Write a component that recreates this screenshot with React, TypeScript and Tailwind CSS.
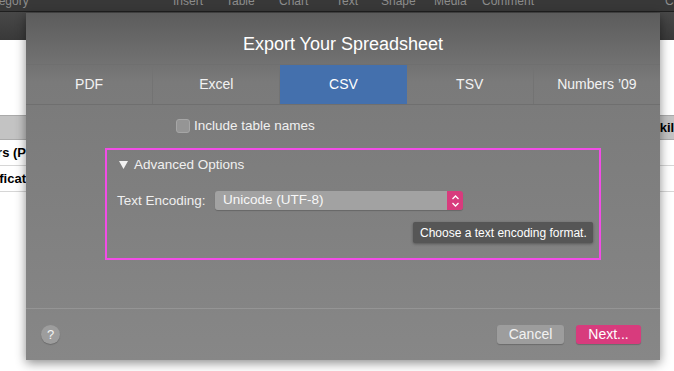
import * as React from "react";

const MENU = [
  { label: "Category", w: "w-[173px]", shift: "-ml-[20px]" },
  { label: "Insert", w: "w-[53px]", shift: "" },
  { label: "Table", w: "w-[53px]", shift: "" },
  { label: "Chart", w: "w-[57px]", shift: "" },
  { label: "Text", w: "w-[45px]", shift: "" },
  { label: "Shape", w: "w-[53px]", shift: "" },
  { label: "Media", w: "w-[48px]", shift: "" },
  { label: "Comment", w: "w-[183px]", shift: "" },
  { label: "Collaborate", w: "w-[40px]", shift: "" },
];

const TABS = ["PDF", "Excel", "CSV", "TSV", "Numbers ’09"];

function StepperIcon() {
  return (
    <svg width="9" height="14" viewBox="0 0 9 14" fill="none">
      <path d="M1.5 5L4.5 2L7.5 5" stroke="white" strokeWidth="1.3" />
      <path d="M1.5 9L4.5 12L7.5 9" stroke="white" strokeWidth="1.3" />
    </svg>
  );
}

function Background() {
  return (
    <div className="flex h-[371px] w-[674px] flex-col bg-white">
      {/* app menu bar, mostly cut off */}
      <div className="h-[12px] overflow-hidden border-b border-[#1f1f1f] bg-[#383838]">
        <div className="-mt-[6px] flex whitespace-nowrap text-[12px] leading-[14px] text-[#8c8c8c]">
          {MENU.map((m) => (
            <div key={m.label} className={`${m.w} shrink-0`}>
              <span className={`block ${m.shift}`}>{m.label}</span>
            </div>
          ))}
        </div>
      </div>
      <div className="h-[28px] bg-linear-to-b from-[#484848] to-[#393939]" />

      {/* sheet peeking out beside the dialog */}
      <div className="flex flex-1 justify-between text-[13px] font-bold text-black">
        <div className="w-[26px] overflow-hidden pt-[75px]">
          <div className="h-[25px] border-y border-[#aaaaaa] bg-[#c3c3c3]" />
          <div className="flex h-[26px] items-center justify-end whitespace-nowrap border-b border-[#d6d6d6]">
            Customers (P
          </div>
          <div className="flex h-[26px] items-center justify-end whitespace-nowrap border-b border-[#d6d6d6]">
            Certificat
          </div>
        </div>
        <div className="w-[14px] overflow-hidden pt-[75px]">
          <div className="flex h-[25px] items-center whitespace-nowrap border-y border-[#aaaaaa] bg-[#c3c3c3]">
            <span className="-ml-[9px]">Skills</span>
          </div>
          <div className="h-[26px] border-b border-[#d6d6d6]" />
          <div className="h-[26px] border-b border-[#d6d6d6]" />
        </div>
      </div>
    </div>
  );
}

export default function App() {
  return (
    <div
      className="relative h-[371px] w-[674px] overflow-hidden"
      style={{ fontFamily: '"Liberation Sans", Arial, sans-serif' }}
    >
      <Background />

      {/* Export dialog */}
      <div className="absolute left-[26px] top-[13px] flex h-[347px] w-[634px] flex-col bg-linear-to-b from-[#5c5c5c] via-[#7a7a7a] via-[20%] to-[#878787] shadow-[0_3px_10px_rgba(0,0,0,0.45)]">
        <div className="h-[51px] pt-[20px] text-center text-[18px] leading-[22px] text-white">
          Export Your Spreadsheet
        </div>

        {/* format tabs */}
        <div className="flex h-[41px] border-y border-[#6f6f6f]">
          {TABS.map((t) => (
            <div
              key={t}
              className={
                t === "CSV"
                  ? "flex flex-1 items-center justify-center bg-[#4470ad] text-[14px] text-white"
                  : "flex flex-1 items-center justify-center border-r border-[#737373] text-[14px] text-[#f2f2f2] last:border-r-0"
              }
            >
              {t}
            </div>
          ))}
        </div>

        <div className="flex flex-1 flex-col">
          <div className="flex items-center gap-[4px] pl-[150px] pt-[12px]">
            <div className="h-[14px] w-[14px] rounded-[3px] border border-[#a6a6a6] bg-[#959595]" />
            <span className="text-[13.5px] leading-[18px] text-[#f0f0f0]">Include table names</span>
          </div>

          {/* highlighted advanced options */}
          <div className="ml-[79px] mt-[13px] flex h-[112px] w-[496px] flex-col border-2 border-[#f24ce6]">
            <div className="flex items-center gap-[6px] pl-[12px] pt-[6px]">
              <svg width="9" height="8" viewBox="0 0 9 8">
                <path d="M0 0H9L4.5 8Z" fill="#f2f2f2" />
              </svg>
              <span className="text-[13.5px] leading-[18px] text-[#f0f0f0]">Advanced Options</span>
            </div>

            <div className="mt-[17px] flex items-center pl-[10px]">
              <span className="w-[98px] text-[13.5px] leading-[19px] text-[#efefef]">Text Encoding:</span>
              <div className="flex h-[19px] w-[248px] rounded-[3px] shadow-[0_1px_1px_rgba(0,0,0,0.2)]">
                <div className="flex flex-1 items-center rounded-l-[3px] bg-[#a2a2a2] pl-[8px] text-[13.5px] text-[#f7f7f7]">
                  Unicode (UTF-8)
                </div>
                <div className="flex w-[16px] items-center justify-center rounded-r-[3px] bg-[#d83b7d]">
                  <StepperIcon />
                </div>
              </div>
            </div>

            <div className="mt-[12px] flex justify-end pr-[6px]">
              <div className="flex h-[21px] w-[180px] items-center rounded-[2px] bg-[#565656] pl-[7px] text-[12px] text-white shadow-[0_1px_3px_rgba(0,0,0,0.35)]">
                Choose a text encoding format.
              </div>
            </div>
          </div>
        </div>

        {/* footer */}
        <div className="flex h-[52px] items-center border-t border-[#959595] pl-[15px] pr-[19px]">
          <div className="flex h-[19px] w-[19px] items-center justify-center rounded-full bg-[#9d9d9d] text-[13px] text-[#f4f4f4] shadow-[0_1px_1px_rgba(0,0,0,0.2)]">
            ?
          </div>
          <div className="ml-auto flex gap-[12px]">
            <button className="h-[19px] w-[67px] rounded-[3px] bg-[#9d9d9d] text-[14px] leading-[19px] text-[#f2f2f2] shadow-[0_1px_1px_rgba(0,0,0,0.2)]">
              Cancel
            </button>
            <button className="h-[19px] w-[65px] rounded-[3px] bg-[#d83b7d] text-[14px] leading-[19px] text-white shadow-[0_1px_1px_rgba(0,0,0,0.2)]">
              Next...
            </button>
          </div>
        </div>
      </div>
    </div>
  );
}
